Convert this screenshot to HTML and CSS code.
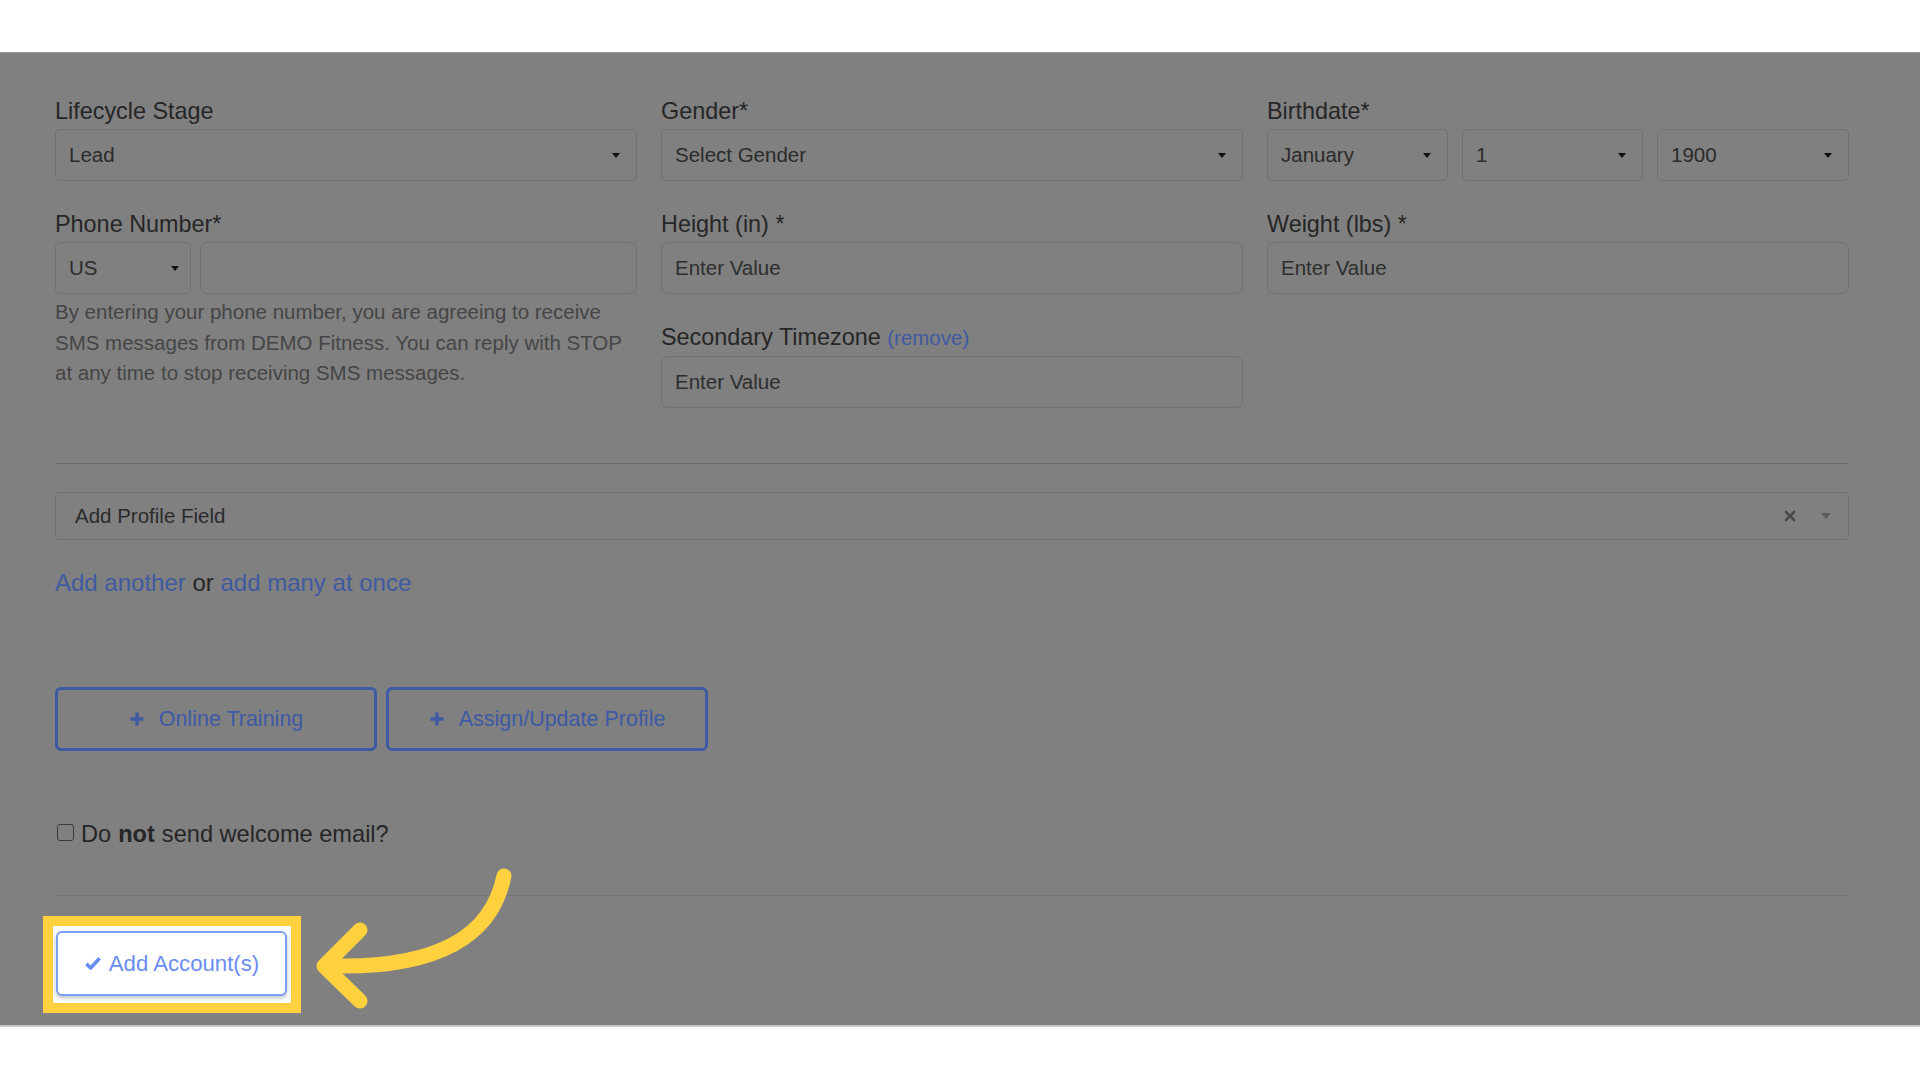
FILE: index.html
```html
<!DOCTYPE html>
<html lang="en">
<head>
    <meta charset="UTF-8">
    <meta name="viewport" content="width=device-width, initial-scale=1.0">
    <title>Add Account</title>
    <link rel="stylesheet" href="styles.css">
</head>
<body>
    <main class="page">

        <div class="fields">
            <!-- left column -->
            <div class="col">
                <div class="group">
                    <label class="label">Lifecycle Stage</label>
                    <div class="select"><span>Lead</span><i class="caret"></i></div>
                </div>
                <div class="group">
                    <label class="label">Phone Number*</label>
                    <div class="phone">
                        <div class="select country"><span>US</span><i class="caret"></i></div>
                        <input class="input" type="text">
                    </div>
                    <p class="help">By entering your phone number, you are agreeing to receive SMS messages from DEMO Fitness. You can reply with STOP at any time to stop receiving SMS messages.</p>
                </div>
            </div>

            <!-- middle column -->
            <div class="col">
                <div class="group">
                    <label class="label">Gender*</label>
                    <div class="select"><span>Select Gender</span><i class="caret"></i></div>
                </div>
                <div class="group">
                    <label class="label">Height (in) *</label>
                    <input class="input" type="text" placeholder="Enter Value">
                </div>
                <div class="group">
                    <label class="label">Secondary Timezone <a href="#" class="remove">(remove)</a></label>
                    <input class="input" type="text" placeholder="Enter Value">
                </div>
            </div>

            <!-- right column -->
            <div class="col">
                <div class="group">
                    <label class="label">Birthdate*</label>
                    <div class="birth">
                        <div class="select month"><span>January</span><i class="caret"></i></div>
                        <div class="select day"><span>1</span><i class="caret"></i></div>
                        <div class="select year"><span>1900</span><i class="caret"></i></div>
                    </div>
                </div>
                <div class="group">
                    <label class="label">Weight (lbs) *</label>
                    <input class="input" type="text" placeholder="Enter Value">
                </div>
            </div>
        </div>

        <hr class="rule">

        <div class="profile-field">
            <span>Add Profile Field</span>
            <svg class="clear" width="12" height="12" viewBox="0 0 12 12"><path d="M2 2 L10 10 M10 2 L2 10" stroke="#4a4a4a" stroke-width="2.6" stroke-linecap="round"/></svg>
            <i class="caret light"></i>
        </div>

        <div class="more">
            <a href="#">Add another</a> or <a href="#">add many at once</a>
        </div>

        <div class="actions">
            <button class="btn-outline">
                <svg width="16" height="16" viewBox="0 0 16 16"><path d="M8 1.5 V14.5 M1.5 8 H14.5" stroke="currentColor" stroke-width="3.4"/></svg>
                Online Training
            </button>
            <button class="btn-outline">
                <svg width="16" height="16" viewBox="0 0 16 16"><path d="M8 1.5 V14.5 M1.5 8 H14.5" stroke="currentColor" stroke-width="3.4"/></svg>
                Assign/Update Profile
            </button>
        </div>

        <label class="check-row">
            <input type="checkbox" class="check">
            Do <b>not</b> send welcome email?
        </label>

        <hr class="rule second">

        <div class="spotlight">
            <button class="btn-submit">
                <svg width="18" height="15" viewBox="0 0 16 14"><path d="M1.8 7.4 L5.8 11.2 L14.2 2.2" fill="none" stroke="currentColor" stroke-width="3.4" stroke-linejoin="round"/></svg>
                Add Account(s)
            </button>
        </div>
    </main>

    <!-- annotation arrow -->
    <svg class="arrow" width="1920" height="1080" viewBox="0 0 1920 1080">
        <path d="M504 876 C 492 935 440 968 334 966" fill="none" stroke="#ffd13f" stroke-width="15" stroke-linecap="round"/>
        <path d="M360 930 L324 966 L360 1001" fill="none" stroke="#ffd13f" stroke-width="15" stroke-linecap="round" stroke-linejoin="round"/>
    </svg>
</body>
</html>
```

FILE: styles.css
```css
*{
    box-sizing: border-box;
    margin: 0;
    padding: 0;
}

body{
    background-color: #ffffff;
    font-family: "Liberation Sans", Arial, Helvetica, sans-serif;
    color: #272727;
    width: 1920px;
    height: 1080px;
    overflow: hidden;
    position: relative;
}

.page{
    margin-top: 52px;
    height: 975px;
    background-color: #808080;
    border-top: 1px solid #9a9a9a;
    border-bottom: 2px solid #c9c9c9;
    padding: 44px 71px 0 55px;
}

/* form grid */

.fields{
    display: grid;
    grid-template-columns: repeat(3, 1fr);
    column-gap: 24px;
    align-items: start;
}

.group{
    margin-bottom: 29px;
}

.col .group:last-child{
    margin-bottom: 0;
}

.label{
    display: block;
    font-size: 23.4px;
    line-height: 28px;
    margin-bottom: 4px;
    color: #262626;
}

.remove{
    color: #3f5aa0;
    font-size: 20.5px;
    text-decoration: none;
}

.select,
.input{
    height: 52px;
    border: 1px solid #717171;
    border-radius: 5px;
    background-color: #808080;
    font-family: inherit;
    font-size: 20.5px;
    color: #2b2b2b;
}

.select{
    display: flex;
    align-items: center;
    justify-content: space-between;
    padding: 0 16px 0 13px;
}

.input{
    width: 100%;
    padding: 0 13px;
    outline: none;
    border-radius: 7px;
}

.input::placeholder{
    color: #2e2e2e;
}

.caret{
    width: 0;
    height: 0;
    border-left: 4px solid transparent;
    border-right: 4px solid transparent;
    border-top: 5px solid #111;
}

.caret.light{
    border-left-width: 5px;
    border-right-width: 5px;
    border-top: 6px solid #5a5a5a;
}

.phone{
    display: flex;
    gap: 9px;
}

.country{
    width: 136px;
    flex-shrink: 0;
    padding-right: 11px;
}

.help{
    margin-top: 3px;
    font-size: 20.5px;
    line-height: 30.6px;
    color: #454545;
}

.birth{
    display: flex;
    gap: 14px;
}

.month, .day{
    width: 181px;
    flex-shrink: 0;
}

.year{
    flex: 1;
}

/* lower section */

.rule{
    border: none;
    border-top: 1px solid #6c6c6c;
    margin: 55px 0 28px;
}

.profile-field{
    height: 48px;
    border: 1px solid #6f6f6f;
    border-radius: 4px;
    display: flex;
    align-items: center;
    padding: 0 17px 0 19px;
    font-size: 20.5px;
    color: #2b2b2b;
}

.profile-field span{
    flex: 1;
}

.clear{
    margin-right: 25px;
}

.more{
    margin-top: 27px;
    font-size: 24px;
    line-height: 32px;
    color: #262626;
}

.more a{
    color: #3f5aa0;
    text-decoration: none;
}

.actions{
    display: flex;
    gap: 9px;
    margin-top: 88px;
}

.btn-outline{
    width: 322px;
    height: 64px;
    border: 3px solid #3e5aa5;
    border-radius: 6px;
    background: none;
    color: #3e5aa5;
    font-family: inherit;
    font-size: 21.5px;
    display: flex;
    align-items: center;
    justify-content: center;
    gap: 14px;
}

.check-row{
    display: flex;
    align-items: center;
    gap: 7px;
    margin-top: 67px;
    font-size: 23.6px;
    line-height: 32px;
    color: #262626;
    padding-left: 2px;
}

.check{
    appearance: none;
    width: 17px;
    height: 17px;
    border: 1.5px solid #3a3a3a;
    border-radius: 3px;
    margin-top: -4px;
}

.rule.second{
    margin: 45px 0 20px;
    border-top-color: #747474;
}

/* highlighted submit */

.spotlight{
    display: inline-block;
    margin-left: -12px;
    border: 10px solid #ffd13f;
    background-color: #ffffff;
    padding: 5px 4px 7px 3px;
}

.btn-submit{
    width: 231px;
    height: 65px;
    border: 2px solid #7c9ef6;
    border-radius: 6px;
    background-color: #ffffff;
    box-shadow: 0 2px 4px rgba(0, 0, 0, 0.25);
    color: #6a8df1;
    font-family: inherit;
    font-size: 22.2px;
    display: flex;
    align-items: center;
    justify-content: center;
    gap: 7px;
}

.arrow{
    position: absolute;
    top: 0;
    left: 0;
    pointer-events: none;
}
```
